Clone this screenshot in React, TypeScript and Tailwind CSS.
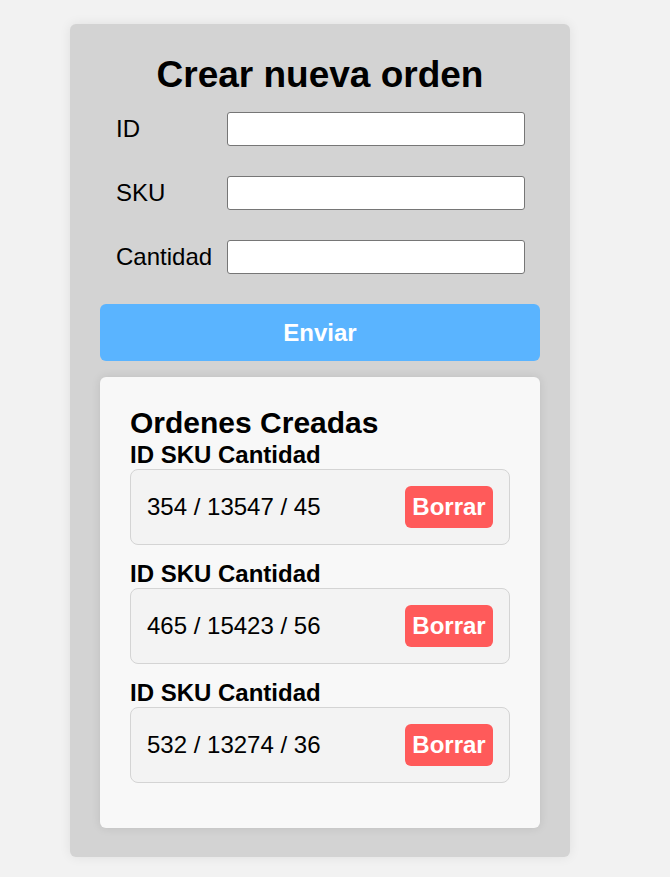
import { useState } from 'react';

type Orden = { id: string; sku: string; cantidad: string };

const inicial: Orden[] = [
  { id: '354', sku: '13547', cantidad: '45' },
  { id: '465', sku: '15423', cantidad: '56' },
  { id: '532', sku: '13274', cantidad: '36' },
];

const campos = [
  { name: 'id', label: 'ID' },
  { name: 'sku', label: 'SKU' },
  { name: 'cantidad', label: 'Cantidad' },
];

export default function App() {
  const [ordenes, setOrdenes] = useState<Orden[]>(inicial);
  const [form, setForm] = useState<Orden>({ id: '', sku: '', cantidad: '' });

  const enviar = () => {
    if (!form.id) return;
    setOrdenes([...ordenes, form]);
    setForm({ id: '', sku: '', cantidad: '' });
  };

  const borrar = (idx: number) => {
    setOrdenes(ordenes.filter((_, i) => i !== idx));
  };

  return (
    <div className="min-h-[877px] bg-[#f2f2f2] pt-[24px] pb-[20px] font-['Liberation_Sans',Arial,sans-serif] text-black">
      <div className="ml-[70px] w-[500px] rounded-[6px] bg-[#d3d3d3] px-[30px] pt-[30px] pb-[29px] shadow-[0_0_12px_rgba(0,0,0,0.08)]">
        <h2 className="text-center text-[37px] font-bold leading-[42px]">Crear nueva orden</h2>

        <div className="mt-[16px] flex flex-col gap-[30px]">
          {campos.map((c) => (
            <div key={c.name} className="flex h-[34px] items-center pl-[16px]">
              <label className="w-[111px] text-[24px] leading-none">{c.label}</label>
              <input
                className="h-[34px] w-[298px] rounded-[3px] border border-[#767676] bg-white px-2 text-[18px]"
                value={form[c.name as keyof Orden]}
                onChange={(e) => setForm({ ...form, [c.name]: e.target.value })}
              />
            </div>
          ))}
        </div>

        <button
          onClick={enviar}
          className="mt-[30px] h-[57px] w-full rounded-[6px] bg-[#5ab4ff] text-[24px] font-bold text-white"
        >
          Enviar
        </button>

        <div className="mt-[16px] rounded-[6px] bg-[#f8f8f8] px-[30px] pt-[30px] pb-[45px] shadow-[0_0_10px_rgba(0,0,0,0.1)]">
          <h3 className="text-[30px] font-bold leading-[32px]">Ordenes Creadas</h3>
          {ordenes.map((o, i) => (
            <div key={i} className={i === 0 ? 'mt-[4px]' : 'mt-[17px]'}>
              <div className="text-[24px] font-bold leading-[24px]">ID SKU Cantidad</div>
              <div className="mt-[2px] flex h-[76px] items-center justify-between rounded-[8px] border border-[#d4d4d4] bg-[#f3f3f3] pl-[16px] pr-[16px]">
                <span className="text-[24px]">
                  {o.id} / {o.sku} / {o.cantidad}
                </span>
                <button
                  onClick={() => borrar(i)}
                  className="h-[42px] w-[88px] rounded-[6px] bg-[#ff5a5a] text-[24px] font-bold text-white"
                >
                  Borrar
                </button>
              </div>
            </div>
          ))}
        </div>
      </div>
    </div>
  );
}
